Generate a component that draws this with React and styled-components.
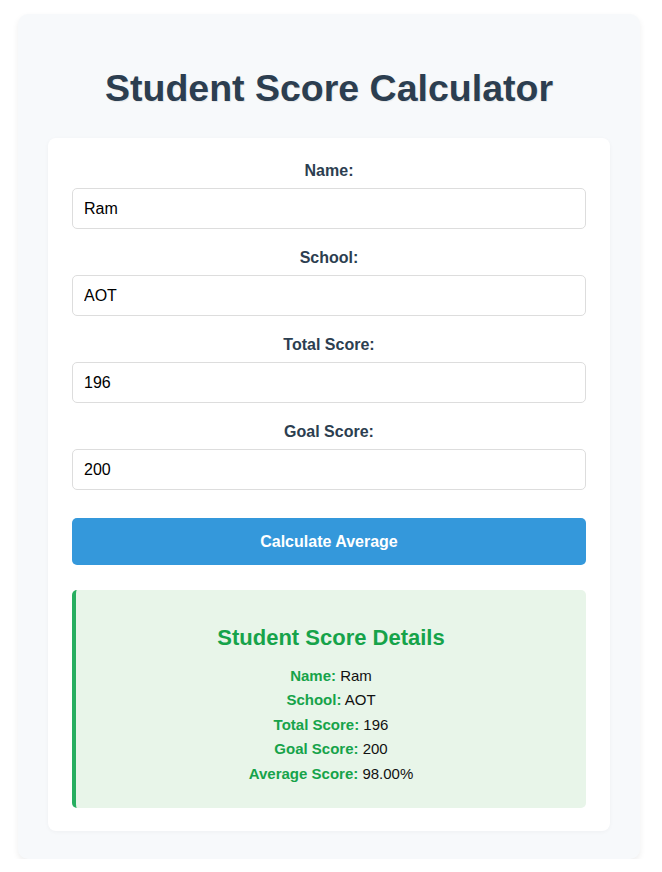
import React, { useState } from 'react';
import styled, { createGlobalStyle } from 'styled-components';

const GlobalStyle = createGlobalStyle`
  body {
    margin: 0;
    background: #ffffff;
    font-family: "Liberation Sans", Arial, sans-serif;
  }
`;

const App = () => {
  const [name, setName] = useState('Ram');
  const [school, setSchool] = useState('AOT');
  const [total, setTotal] = useState('196');
  const [goal, setGoal] = useState('200');
  const [result, setResult] = useState({ name: 'Ram', school: 'AOT', total: '196', goal: '200' });

  // 평균 계산
  const handleCalc = () => setResult({ name, school, total, goal });
  const average = ((Number(result.total) / Number(result.goal)) * 100).toFixed(2);

  return (
    <>
      <GlobalStyle />
      <Wrapper>
        <Title>Student Score Calculator</Title>
        <Card>
          <Field>
            <Label>Name:</Label>
            <Input value={name} onChange={e => setName(e.target.value)} />
          </Field>
          <Field>
            <Label>School:</Label>
            <Input value={school} onChange={e => setSchool(e.target.value)} />
          </Field>
          <Field>
            <Label>Total Score:</Label>
            <Input value={total} onChange={e => setTotal(e.target.value)} />
          </Field>
          <Field>
            <Label>Goal Score:</Label>
            <Input value={goal} onChange={e => setGoal(e.target.value)} />
          </Field>
          <Button onClick={handleCalc}>Calculate Average</Button>
          <Result>
            <ResultTitle>Student Score Details</ResultTitle>
            <Line><Key>Name:</Key> {result.name}</Line>
            <Line><Key>School:</Key> {result.school}</Line>
            <Line><Key>Total Score:</Key> {result.total}</Line>
            <Line><Key>Goal Score:</Key> {result.goal}</Line>
            <Line><Key>Average Score:</Key> {average}%</Line>
          </Result>
        </Card>
      </Wrapper>
    </>
  );
};

const Wrapper = styled.div`
  width: 622px;
  box-sizing: border-box;
  margin: 14px 0 0 18px;
  padding: 30px 30px 28px;
  background-color: #f7f9fb;
  border-radius: 10px;
  box-shadow: 0 3px 6px rgba(0, 0, 0, 0.07);
`;

const Title = styled.h1`
  margin: 23px 0 28px;
  text-align: center;
  font-size: 37.5px;
  font-weight: bold;
  color: #2c3e50;
  text-shadow: 1px 1px 1px rgba(0, 0, 0, 0.08);
`;

const Card = styled.div`
  background-color: #ffffff;
  border-radius: 8px;
  padding: 24px 24px 23px;
  box-shadow: 0 1px 4px rgba(0, 0, 0, 0.04);
`;

const Field = styled.div`
  display: flex;
  flex-direction: column;
  margin-bottom: 20px;
`;

const Label = styled.label`
  margin-bottom: 8px;
  text-align: center;
  font-size: 16px;
  font-weight: bold;
  color: #2c3e50;
`;

const Input = styled.input`
  box-sizing: border-box;
  width: 100%;
  height: 41px;
  padding: 10px 11px;
  border: 1px solid #dddddd;
  border-radius: 5px;
  font-family: "Liberation Sans", Arial, sans-serif;
  font-size: 16px;
  color: #000000;
  outline: none;
`;

const Button = styled.button`
  display: block;
  width: 100%;
  height: 47px;
  margin-top: 28px;
  border: none;
  border-radius: 5px;
  background-color: #3498db;
  color: #ffffff;
  font-family: "Liberation Sans", Arial, sans-serif;
  font-size: 16px;
  font-weight: bold;
  cursor: pointer;
`;

const Result = styled.div`
  margin-top: 25px;
  padding: 20px 20px 22px;
  background-color: #e8f5e9;
  border-left: 4px solid #27ae60;
  border-radius: 5px;
  text-align: center;
`;

const ResultTitle = styled.h3`
  margin: 15px 0 13px;
  font-size: 22px;
  font-weight: bold;
  color: #16a34a;
`;

const Line = styled.p`
  margin: 0;
  font-size: 15px;
  line-height: 24.4px;
  color: #111111;
`;

const Key = styled.strong`
  color: #16a34a;
`;

export default App;
